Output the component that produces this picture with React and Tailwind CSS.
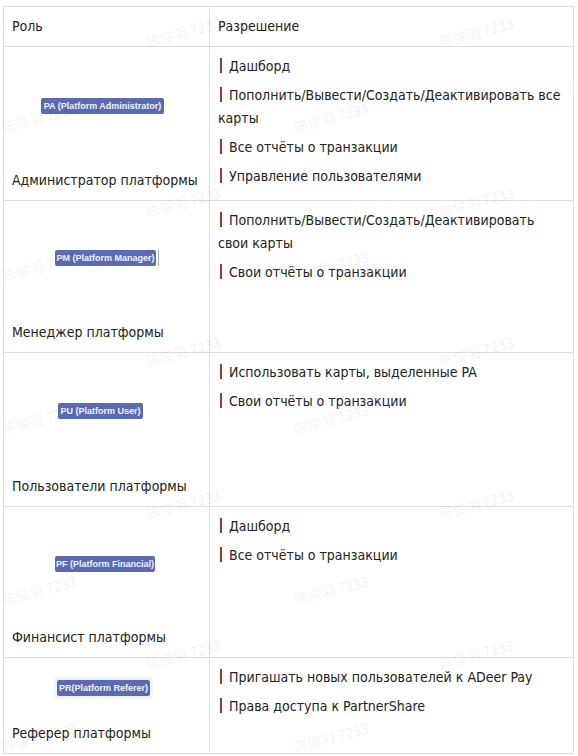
import React from 'react';

const rows = [
  {
    badge: 'PA (Platform Administrator)',
    badgeCls: 'ml-[29px] mt-[51px] w-[123px]',
    caption: 'Администратор платформы',
    perms: ['Дашборд', 'Пополнить/Вывести/Создать/Деактивировать все карты', 'Все отчёты о транзакции', 'Управление пользователями'],
    h: 'h-[154px]',
  },
  {
    badge: 'PM (Platform Manager)',
    badgeCls: 'ml-[43px] mt-[49px] w-[104px]',
    caption: 'Менеджер платформы',
    perms: ['Пополнить/Вывести/Создать/Деактивировать свои карты', 'Свои отчёты о транзакции'],
    h: 'h-[152px]',
    cursor: true,
  },
  {
    badge: 'PU (Platform User)',
    badgeCls: 'ml-[46px] mt-[50px] w-[85px]',
    caption: 'Пользователи платформы',
    perms: ['Использовать карты, выделенные PA', 'Свои отчёты о транзакции'],
    h: 'h-[154px]',
  },
  {
    badge: 'PF (Platform Financial)',
    badgeCls: 'ml-[43px] mt-[49px] w-[100px]',
    caption: 'Финансист платформы',
    perms: ['Дашборд', 'Все отчёты о транзакции'],
    h: 'h-[151px]',
  },
  {
    badge: 'PR(Platform Referer)',
    badgeCls: 'ml-[45px] mt-[22px] w-[99px]',
    caption: 'Реферер платформы',
    perms: ['Пригашать новых пользователей к ADeer Pay', 'Права доступа к PartnerShare'],
    h: 'h-[96px]',
    halo: true,
  },
];

// watermark boxes, 78x33 each
const marks = [
  'left-[144px] top-[15px]', 'left-[437px] top-[15px]',
  'left-0 top-[100px]', 'left-[292px] top-[100px]',
  'left-[144px] top-[185px]', 'left-[437px] top-[185px]',
  'left-0 top-[249px]', 'left-[292px] top-[249px]',
  'left-[144px] top-[334px]', 'left-[437px] top-[334px]',
  'left-0 top-[402px]', 'left-[292px] top-[402px]',
  'left-[144px] top-[487px]', 'left-[437px] top-[487px]',
  'left-0 top-[573px]', 'left-[292px] top-[573px]',
  'left-[144px] top-[637px]', 'left-[437px] top-[637px]',
  'left-0 top-[720px]', 'left-[292px] top-[720px]',
];

function Badge({ row }) {
  const pill = (
    <div className="flex h-[16px] w-full items-center justify-center rounded-[2px] bg-[#5a6bb4] text-[9px] font-bold leading-none text-[#eef1fb] [font-family:'Liberation_Sans',Arial,sans-serif]">
      {row.badge}
    </div>
  );
  return (
    <div className={`flex items-center ${row.badgeCls}`}>
      {row.halo ? <div className="-m-[3px] w-full rounded-[2px] bg-[#f4f5fa] p-[3px]">{pill}</div> : pill}
      {row.cursor && <div className="ml-[2px] h-[16px] w-px shrink-0 bg-[#a3abcb]" />}
    </div>
  );
}

export default function App() {
  return (
    <div className="relative h-[756px] w-[578px] overflow-hidden bg-white pt-[6px] text-[14px] leading-[23px] text-[#222] [font-family:'DejaVu_Sans_Condensed','DejaVu_Sans',sans-serif]">
      <div className="ml-[3px] w-[571px] border-x border-t border-[#dedede]">
        {/* header */}
        <div className="grid h-[40px] grid-cols-[206px_1fr] border-b border-[#dedede]">
          <div className="flex items-center border-r border-[#dedede] px-2">Роль</div>
          <div className="flex items-center px-2">Разрешение</div>
        </div>

        {rows.map((row) => (
          <div key={row.caption} className={`grid grid-cols-[206px_1fr] border-b border-[#dedede] ${row.h}`}>
            <div className="flex flex-col border-r border-[#dedede] px-2">
              <Badge row={row} />
              <p className="mt-auto pb-[8px]">{row.caption}</p>
            </div>
            <div className="px-2 pt-[8px]">
              {row.perms.map((p) => (
                <p key={p} className="mb-[6px]">
                  <span className="mr-[7px] ml-[2px] inline-block h-[15px] w-[2px] bg-[#9c3a22] align-[-2px]" />
                  {p}
                </p>
              ))}
            </div>
          </div>
        ))}
      </div>

      {/* watermark */}
      {marks.map((m) => (
        <div key={m} className={`pointer-events-none absolute flex h-[33px] w-[78px] items-center justify-center ${m}`}>
          <span className="-rotate-[15deg] whitespace-nowrap text-[14px] leading-none text-black/[0.07] [font-family:'Noto_Sans_CJK_SC',sans-serif]">
            陈俊羽 7233
          </span>
        </div>
      ))}
    </div>
  );
}
